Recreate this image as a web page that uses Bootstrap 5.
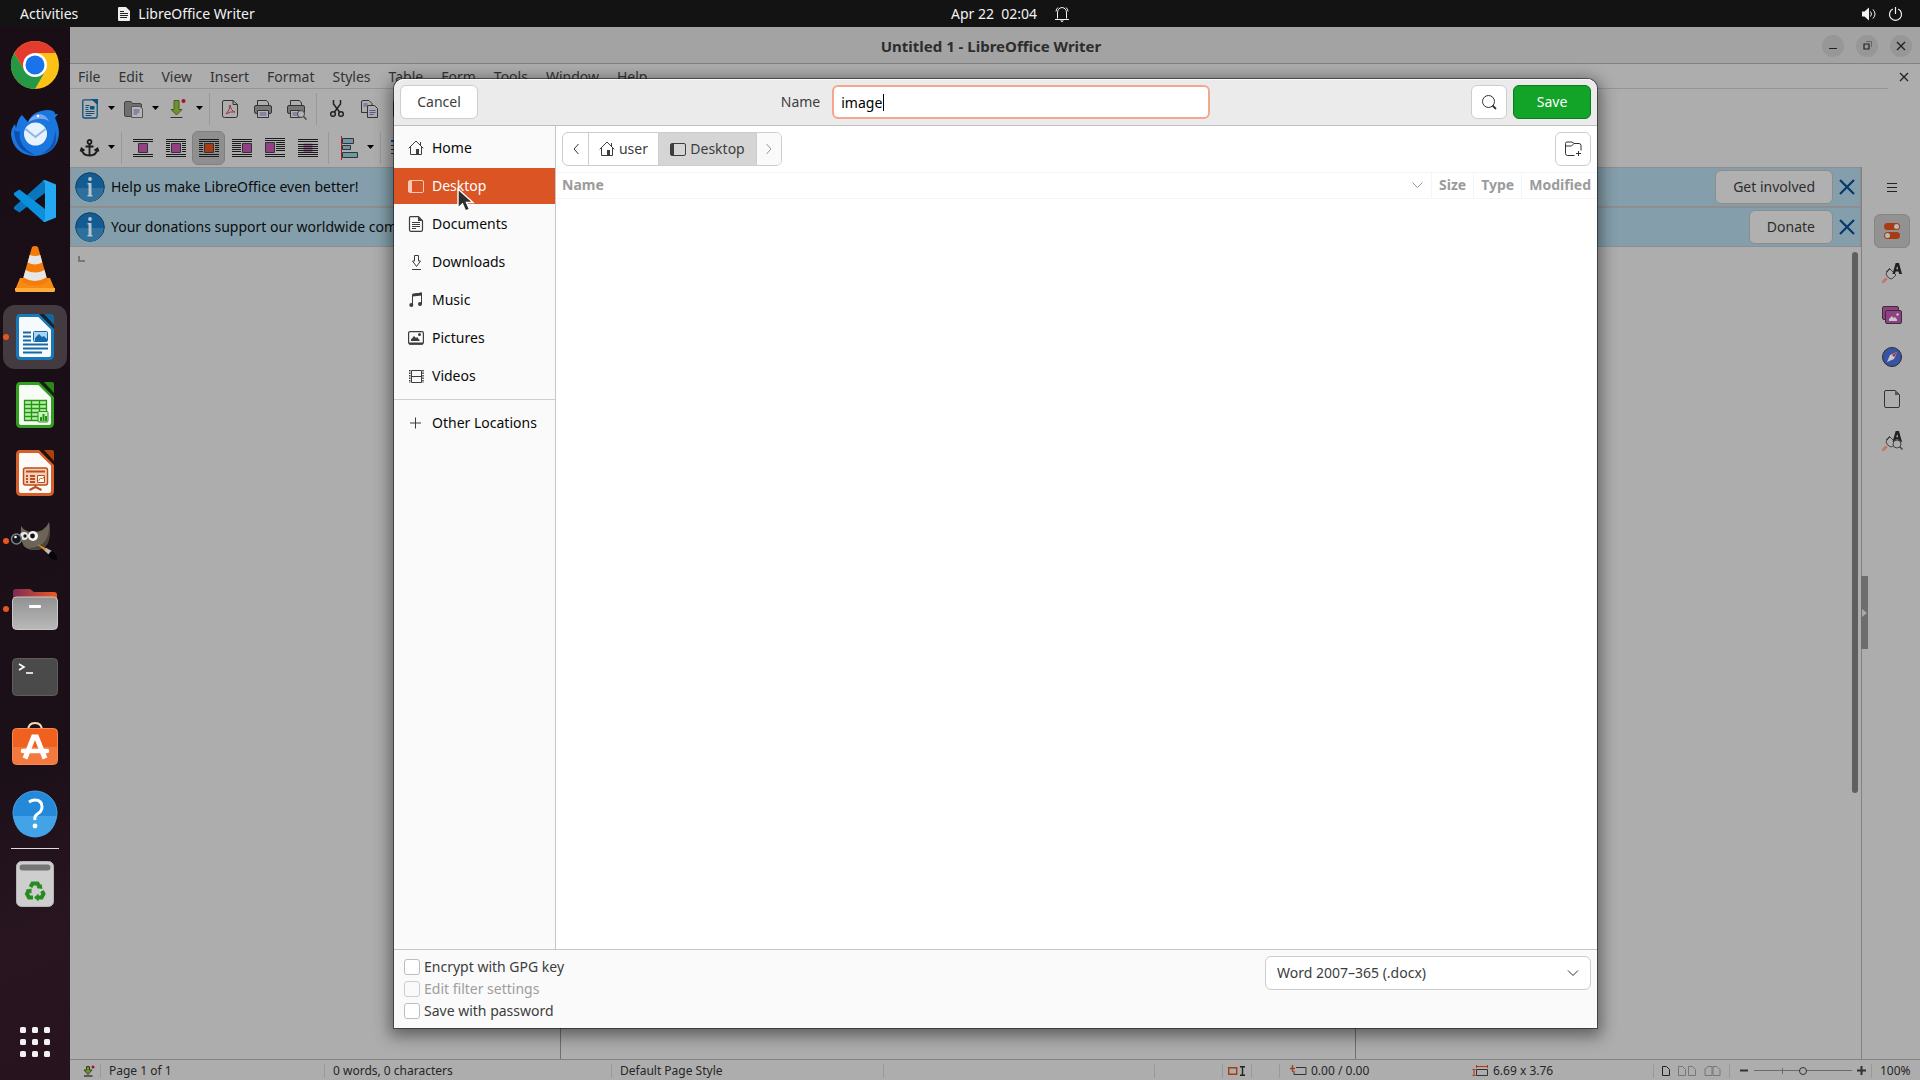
<!DOCTYPE html>
<html lang="en">
<head>
<meta charset="utf-8">
<meta name="viewport" content="width=device-width, initial-scale=1">
<title>Untitled 1 - LibreOffice Writer</title>
<link rel="stylesheet" href="https://cdn.jsdelivr.net/npm/bootstrap@5.3.0/dist/css/bootstrap.min.css">
<script src="https://cdn.jsdelivr.net/npm/bootstrap@5.3.0/dist/js/bootstrap.bundle.min.js"></script>
<style>
  body { font-family: "Noto Sans", "Open Sans", sans-serif; font-size: 14px; line-height: 20px; background: #adadad; color: #2b2b2b; }
  button { font: inherit; color: inherit; background: none; border: 0; padding: 0; }
  svg { display: block; flex: none; overflow: visible; }
  .topbar { height: 27px; background: #131313; color: #f2f2f2; }
  .topbar .side { flex: 1 1 0; }
  .topbar .clock { padding-left: 100px; gap: 18px; }
  .topbar .status-icons { gap: 13px; padding-right: 18px; }
  .dock { width: 70px; background: linear-gradient(160deg, #190e15 0%, #1c1018 70%, #28151f 85%, #26131e 100%); padding: 6px 3px; }
  .dock button { width: 64px; height: 64px; position: relative; display: flex; align-items: center; justify-content: center; border-radius: 12px; }
  .dock button.current { background: #443b41; }
  .dock button.running::before { content: ""; position: absolute; left: 0; top: 29px; width: 6px; height: 6px; border-radius: 50%; background: #e95420; }
  .dock hr { width: 48px; margin: -1px auto; border-top: 1px solid #fff; opacity: .85; }
  .titlebar { height: 37px; padding-top: 1px; background: #a3a3a3; border-bottom: 1px solid #828282; font-size: 15px; font-weight: 700; color: #2d2d2d; }
  .titlebar .side { flex: 1 1 0; }
  .titlebar button { width: 22px; height: 22px; border-radius: 50%; background: #979797; display: flex; align-items: center; justify-content: center; }
  .menus { height: 25px; gap: 18px; padding: 1px 0 0 8px; border-bottom: 1px solid #959595; }
  .menus button { color: #333; }
  .tools { height: 39px; padding-left: 3px; }
  .tools button { width: 33px; height: 34px; display: flex; align-items: center; justify-content: center; border-radius: 6px; }
  .tools button.more { width: 11px; }
  .tools button.active { background: #8f8f8f; border: 1px solid #808080; }
  .tools .divider { width: 1px; height: 32px; margin: 0 3px 0 4px; background: #999; }
  .infobar { height: 40px; padding: 0 5px 0 4px; gap: 6px; background: #849fab; border: 1px solid #8f8d8d; color: #0b0b0b; }
  .infobar .action { height: 34px; padding: 0 17px; border: 1px solid #8c8c8c; border-radius: 6px; background: #b0b0b0; color: #2d2d2d; }
  .paper { width: 796px; border: 1px solid #6f6f6f; border-width: 0 1px; }
  .scroller { width: 15px; padding: 5px 3px 0 6px; }
  .scroller div { height: 67%; border-radius: 3px; background: #5f5f5f; }
  .deck { width: 59px; border-left: 1px solid #828282; position: relative; }
  .deck-tabs { gap: 8px; padding: 3px 0 0 2px; }
  .deck-tabs button { width: 36px; height: 34px; display: flex; align-items: center; justify-content: center; border-radius: 6px; }
  .deck-tabs button:first-child { margin-bottom: 2px; }
  .deck-tabs button.active { background: #929292; border: 1px solid #868686; }
  .collapser { position: absolute; left: -1px; top: calc(50% - 37px); width: 7px; height: 73px; background: #6d6d6d !important; display: flex; align-items: center; }
  .statusbar { height: 21px; padding-top: 1px; border-top: 1px solid #828282; font-size: 12px; color: #262626; }
  .statusbar > div { display: flex; align-items: center; height: 14px; border-left: 1px solid #999; }
  .statusbar > div:first-child { border-left: 0; }
  .statusbar .grow { flex: 1 1 0; }
  .zoomer { appearance: none; width: 98px; height: 14px; margin: 0 5px; background: linear-gradient(#6c6c6c, #6c6c6c) 28px center / 1px 6px no-repeat, linear-gradient(#6c6c6c, #6c6c6c) center / 100% 1px no-repeat; }
  .zoomer::-webkit-slider-thumb { appearance: none; width: 8px; height: 8px; border: 1px solid #333; border-radius: 50%; background: #adadad; }
  .save-dialog { position: absolute; left: 324px; right: 323px; top: 52px; bottom: 52px; background: #fff; border-radius: 10px 10px 0 0; box-shadow: 0 0 0 1px rgba(0,0,0,.45), 0 4px 16px 4px rgba(0,0,0,.45); color: #3d3d3d; }
  .dialog-head { height: 47px; padding: 0 6px; background: #ebebeb; box-shadow: inset 0 1px #f8f8f8; border-bottom: 1px solid #bfbfbf; border-radius: 10px 10px 0 0; }
  .dialog-head .side { flex: 1 1 0; gap: 6px; }
  .ctl { height: 34px; border: 1px solid #cdcdcd; border-radius: 6px; background: #fff; }
  .ctl.wide { width: 78px; }
  .ctl.square { width: 36px; display: flex; align-items: center; justify-content: center; }
  .ctl.go { background: #12a329; border-color: #0d7a1e; color: #fff; }
  .name-field { width: 378px; height: 34px; border: 2px solid #f5a78e; border-radius: 6px; padding: 0 7px; background: #fff; color: #000; outline: 0; }
  .caret-bar { position: absolute; left: 51px; top: 9px; width: 1px; height: 17px; background: #000; }
  .places { width: 162px; padding-top: 4px; background: #fafafa; border-right: 1px solid #c6c6c6; color: #0a0a0a; }
  .places a { display: flex; align-items: center; gap: 8px; height: 36px; margin-bottom: 2px; padding-left: 14px; color: inherit; text-decoration: none; position: relative; }
  .places a svg { color: #3d3d3d; }
  .places a.active { background: #da5424; color: #fff; }
  .places a.active .place-icon { color: #f6c8b8; }
  .places hr { margin: 5px 0; border-color: #cfcfcf; opacity: 1; }
  .pointer-mark { position: absolute; left: 63px; top: 20px; }
  .pathline { height: 46px; padding: 0 6px; }
  .pathbar { height: 34px; border: 1px solid #cdcdcd; border-radius: 6px; overflow: hidden; }
  .pathbar button { display: flex; align-items: center; justify-content: center; gap: 4px; border-right: 1px solid #cdcdcd; }
  .pathbar button:last-child { border-right: 0; background: #fafafa; }
  .pathbar button.active { background: #d5d5d5; }
  .files { width: 100%; border-collapse: collapse; color: #9b9b9b; }
  .files th { height: 26px; padding: 0 7px 2px; line-height: 20px; border: 1px solid #f5f5f5; border-width: 1px 1px 1px 0; }
  .files th:first-child { padding-left: 6px; }
  .files th:last-child { border-right: 0; padding-right: 6px; }
  .dialog-foot { height: 79px; padding: 6px 6px 0 10px; background: #fafafa; border-top: 1px solid #c6c6c6; }
  .dialog-foot label { display: flex; align-items: center; gap: 4px; height: 22px; }
  .dialog-foot input { appearance: none; width: 16px; height: 16px; margin: 0; border: 1px solid #bdbdbd; border-radius: 3px; background: #fff; }
  .dialog-foot .off { color: #9d9d9d; }
  .dialog-foot .off input { background: #fafafa; border-color: #cdcdcd; }
  .format-box { position: relative; width: 326px; }
  .format-box select { appearance: none; width: 100%; padding: 0 11px; color: #3d3d3d; }
  .format-box svg { position: absolute; right: 12px; top: 13px; pointer-events: none; }
</style>
</head>
<body class="vh-100 d-flex flex-column overflow-hidden">

<svg width="0" height="0" class="position-absolute" aria-hidden="true">
  <defs>
    <symbol id="home" viewBox="0 0 16 16"><path d="M.7 8.3 8 1l7.3 7.3M2.5 7v7.5h11V7M12.5 5V2" fill="none" stroke="currentColor"/><path d="M8 9h3v5.5H8z" fill="currentColor"/></symbol>
    <symbol id="desk" viewBox="0 0 16 16"><rect x=".5" y="2.5" width="15" height="12" rx="1.5" fill="none" stroke="currentColor"/><path d="M1 3h3v11H1z" fill="currentColor"/></symbol>
    <symbol id="cross" viewBox="0 0 16 16"><path d="m1 1 14 14M15 1 1 15" fill="none" stroke="#063a68" stroke-width="2.200"/></symbol>
    <symbol id="info" viewBox="0 0 30 30"><circle cx="15" cy="15" r="14.300" fill="#125b93" stroke="#173c5a"/><path d="M1.500 16a13.500 13.500 0 0 0 27 0z" fill="#2d6f9d"/><circle cx="15" cy="7" r="1.900" fill="#b8c4cc"/><path d="M12.500 11h4v12h1v1.500h-5V23h1V12.500h-1z" fill="#b8c4cc"/></symbol>
    <symbol id="printer" viewBox="0 0 20 20"><path d="M4.500 7V1.500h9L15.500 4v3" fill="none" stroke="#333"/><rect x="1.500" y="6.500" width="17" height="8" rx="1.500" fill="#777" stroke="#333"/><path d="M4.500 11.500h11v7h-11z" fill="#b4b4b4" stroke="#333"/><path d="M6.500 14h7M6.500 16h7" stroke="#55559a"/></symbol>
    <symbol id="savearrow" viewBox="0 0 20 20"><path d="M6 1.500h5v9h3L8.500 16 3 10.500h3z" fill="#6f9130" stroke="#47601c"/><path d="M2.500 18.500h12" stroke="#333"/><circle cx="15.500" cy="2" r="2" fill="#a01424"/></symbol>
    <symbol id="savesmall" viewBox="0 0 12 12"><path d="M3.500 1.500h3V5h2.500L5 9.500 1 5h2.500z" fill="#6f9130" stroke="#33421a"/><path d="M1 11h8.500" stroke="#222" stroke-width="1.200"/><circle cx="10" cy="2" r="1.500" fill="#a01424"/></symbol>
    <symbol id="brush" viewBox="0 0 20 20"><path d="m1 19 3-3" stroke="#c4786c" stroke-width="3" stroke-linecap="round"/><path d="M5 13q-2-2 0-4l3-3 6 6-3 3q-2 2-4 0z M4 9l4-4" fill="#b0b0b0" stroke="#444"/><path d="m10.500 11 3.200-11h3.300L20 11h-2.800l-.6-2.500h-3L13 11z M14.200 6.300h2L15.200 3z" fill="#202020" fill-rule="evenodd"/></symbol>
  </defs>
</svg>

<header class="topbar d-flex align-items-center">
  <div class="side d-flex align-items-center">
    <button type="button" class="ms-3 me-4 ps-1 pe-3">Activities</button>
    <button type="button" class="d-flex align-items-center gap-2"><svg width="12" height="14" viewBox="0 0 12 14"><path d="M1 0h7l4 4v9q0 1-1 1H1q-1 0-1-1V1q0-1 1-1z" fill="#eee"/><path d="M2 4.500h4M2 6.500h8M2 8.500h8M2 10.500h7" stroke="#222"/></svg>LibreOffice Writer</button>
  </div>
  <button type="button" class="clock d-flex align-items-center"><span>Apr 22&nbsp; 02:04</span><svg width="14" height="16" viewBox="0 0 14 16"><path d="M2.500 12.500V7Q2.500 2 7 1.500 11.500 2 11.500 7v5.500M0 13.500h14M1 5.500Q1.200 2.800 3 1.500M13 5.500Q12.800 2.800 11 1.500" fill="none" stroke="#f2f2f2"/><path d="M5 14.500h4l-2 1.800z" fill="#f2f2f2"/></svg></button>
  <div class="side d-flex justify-content-end">
    <button type="button" class="status-icons d-flex align-items-center" aria-label="System menu">
      <svg width="14" height="14" viewBox="0 0 14 14"><path d="M0 4.500h2.500L7 .5v13L2.500 9.500H0z" fill="#f2f2f2"/><path d="M8.500 4.500q2 2.500 0 5M11 2.500q4 4.500 0 9" fill="none" stroke="#f2f2f2"/></svg>
      <svg width="13" height="14" viewBox="0 0 13 14"><path d="M6.500 0v7M3.800 2a6 6 0 1 0 5.400 0" fill="none" stroke="#f2f2f2" stroke-width="1.200"/></svg>
    </button>
  </div>
</header>

<div class="d-flex flex-grow-1 overflow-hidden">
  <nav class="dock d-flex flex-column gap-1" aria-label="Dock">
    <button type="button" aria-label="Google Chrome"><svg width="48" height="48" viewBox="0 0 48 48"><circle cx="24" cy="24" r="24" fill="#fcc216"/><path d="M3.200 12A24 24 0 0 1 44.800 12H24L13.600 30z" fill="#e33b2e"/><path d="M3.200 12A24 24 0 0 0 24 48L34.400 30H13.600z" fill="#259846"/><circle cx="24" cy="24" r="12" fill="#fff"/><circle cx="24" cy="24" r="9.500" fill="#1a73e8"/></svg></button>
    <button type="button" aria-label="Thunderbird"><svg width="48" height="46" viewBox="0 0 48 46"><path d="M17 12Q21 1 36 0q8 0 8 4h3l-3 4q4 8 4 16Q46 44 24 46 3 45 0 25q0-7 4-11l1 4Q7 8 11 5q4 5 6 7z" fill="#1a77df"/><path d="M3 20q3 3 6 1Q6 36 24 45 4 42 3 20z" fill="#0d4fb0"/><path d="M17 12q5-8 12-8 6 1 9 7-9-5-21 1z" fill="#7aa7ee"/><circle cx="24.500" cy="24" r="11.500" fill="#e8f2fd"/><path d="m14.500 19 10 8 10-8" fill="none" stroke="#8db6e8" stroke-width="2"/><path d="M30 44q14-6 14-24 5 20-14 24z" fill="#1152b4"/><circle cx="27" cy="6" r="1.200" fill="#fff"/></svg></button>
    <button type="button" aria-label="Visual Studio Code"><svg width="42" height="42" viewBox="0 0 42 42"><path d="M31 0v13L5.500 32.500 0 29V27L29 .7z" fill="#0b75bd"/><path d="M31 42V29L5.500 9.500 0 13v2L29 41.300z" fill="#0b90dd"/><path d="M31 0 42 4.500v33L31 42l-2-.7q2-1 2-3.300V4q0-2-2-3.300z" fill="#25a9f2"/></svg></button>
    <button type="button" aria-label="VLC"><svg width="40" height="46" viewBox="0 0 40 46"><path d="M5 32h30l5 12q0 2-2 2H2q-2 0-2-2z" fill="#f78a12"/><path d="M0 42h40v2q0 2-2 2H2q-2 0-2-2z" fill="#ffac3a"/><path d="M17 1q3-2 6 0l10 35q-13 7-26 0z" fill="#f57c0a"/><path d="m14.700 9-2 7.500q7 4 14.600 0l-2-7.500q-5 2-10.600 0zM10.500 24l-2 7.500q11 7 23 0l-2-7.500q-9 5-19 0z" fill="#e6e6e6"/></svg></button>
    <button type="button" class="current running" aria-label="LibreOffice Writer"><svg width="38" height="46" viewBox="0 0 38 46"><path d="M4 1.500h19L36.500 15v26q0 3.500-3.500 3.500H5Q1.500 44.500 1.500 41V5Q1.500 1.500 4 1.500z" fill="#f7fafc" stroke="#1878ba" stroke-width="3"/><path d="M23 0 38 15V0z" fill="#16222c"/><path d="M28 0h8q2 0 2 2v9z" fill="#14669f"/><path d="M7 18.500h8M7 22.500h8M7 26.500h8M7 30.500h25M7 34.500h25M7 38.500h19" stroke="#1668a6" stroke-width="2"/><rect x="17.500" y="17.500" width="14" height="10" rx="1" fill="#a8d6f4" stroke="#1668a6"/><path d="M19 27v-3l4-4 3 3 2-1 3 3v2z" fill="#1668a6"/></svg></button>
    <button type="button" aria-label="LibreOffice Calc"><svg width="38" height="46" viewBox="0 0 38 46"><path d="M4 1.500h19L36.500 15v26q0 3.500-3.500 3.500H5Q1.500 44.500 1.500 41V5Q1.500 1.500 4 1.500z" fill="#f8fcf7" stroke="#31a01e" stroke-width="3"/><path d="M23 0 38 15V0z" fill="#151f12"/><path d="M28 0h8q2 0 2 2v9z" fill="#2b8a17"/><path d="M8.500 18.500h22v20h-22z" fill="#b8efab" stroke="#259412" stroke-width="1.300"/><path d="M15.500 18v21M23.500 18v21M8 22.500h23M8 26.500h23M8 30.500h23M8 34.500h23" stroke="#259412" stroke-width="1.300"/><rect x="22" y="29.500" width="10" height="10.500" rx="1" fill="#c8f4be" stroke="#259412"/><path d="M25 39v-4M27.500 39v-7M30 39v-5" stroke="#259412" stroke-width="2"/></svg></button>
    <button type="button" aria-label="LibreOffice Impress"><svg width="38" height="46" viewBox="0 0 38 46"><path d="M4 1.500h19L36.500 15v26q0 3.500-3.500 3.500H5Q1.500 44.500 1.500 41V5Q1.500 1.500 4 1.500z" fill="#fefaf7" stroke="#d4602c" stroke-width="3"/><path d="M23 0 38 15V0z" fill="#24130d"/><path d="M28 0h8q2 0 2 2v9z" fill="#ab420e"/><rect x="7.500" y="18" width="24" height="17" rx="2" fill="#f6d0bc" stroke="#b84f1c" stroke-width="1.500"/><path d="M10 21.500h19M14 26h5M14 29h5M14 32h5M10 26h2M10 29h2M10 32h2M19.500 35v3m0-1-6 3m6-3 6 3" stroke="#b84f1c" stroke-width="2"/><path d="M21.500 25.500h7v7h-7z" fill="#fff" stroke="#b84f1c"/><path d="m22.500 31 2-3 2 1 2-3" fill="none" stroke="#e0702e"/></svg></button>
    <button type="button" class="running" aria-label="GIMP"><svg width="48" height="38" viewBox="0 0 48 38"><path d="M10 4q4 6 12 6 12 0 16-10 2 10-1 20-3 8-13 8-11 0-13-8-2-8-1-16z" fill="#6b6457"/><path d="M38 0q1 12-4 19t-16 7q5 3 10 1 8-1 10-9 2-9 0-18z" fill="#49453d"/><circle cx="13" cy="14" r="4" fill="#e8e8e8"/><circle cx="22" cy="14" r="5" fill="#f4f4f4"/><circle cx="14" cy="14" r="1.700" fill="#111"/><circle cx="21.500" cy="14" r="2.400" fill="#111"/><circle cx="5.500" cy="17" r="5" fill="#15181b" stroke="#7c8388" stroke-width="1.500"/><circle cx="4.500" cy="15" r="1.300" fill="#fff"/><path d="m26 22 11 5-2 3z" fill="#e08a24"/><path d="m35 26 6 3-3 4-4-4z" fill="#bbb"/><path d="M40 29q6 2 6 9-7 0-9-5z" fill="#050505"/></svg></button>
    <button type="button" class="running" aria-label="Files"><svg width="46" height="42" viewBox="0 0 46 42"><defs><linearGradient id="fg"><stop stop-color="#7d2b52"/><stop offset="1" stop-color="#ee5a25"/></linearGradient><linearGradient id="gg" x2="0" y2="1"><stop stop-color="#919191"/><stop offset="1" stop-color="#b9b9b9"/></linearGradient></defs><path d="M1 15V4q0-3 3-3h14l4 3h20q3 0 3 3v8z" fill="url(#fg)"/><rect x=".5" y="9" width="45" height="32.500" rx="4" fill="url(#gg)" stroke="#c9c9c9"/><rect x="17" y="17" width="12" height="3" rx="1" fill="#fff"/></svg></button>
    <button type="button" aria-label="Terminal"><svg width="46" height="38" viewBox="0 0 46 38"><rect x=".5" y=".5" width="45" height="37" rx="4" fill="#4a4a4a" stroke="#5e5e5e"/><path d="m7 6 5 3-5 3" fill="none" stroke="#fff" stroke-width="1.600"/><path d="M14 15h7" stroke="#fff" stroke-width="1.600"/></svg></button>
    <button type="button" class="pb-1" aria-label="Software"><svg width="46" height="43" viewBox="0 0 46 43"><path d="M16 9Q16 1 23 1t7 8" fill="none" stroke="#f4dcae" stroke-width="2"/><rect x=".5" y="6.500" width="45" height="36" rx="4" fill="#f0601f" stroke="#f58a58"/><path d="M1 25h44v13q0 4-4 4H5q-4 0-4-4z" fill="#f3793f"/><path d="M13 36.500 21.500 15h3L33 36.500" fill="none" stroke="#fff" stroke-width="5"/><path d="M11 29h24" stroke="#fff" stroke-width="4.500" stroke-linecap="round"/></svg></button>
    <button type="button" aria-label="Help"><svg width="46" height="46" viewBox="0 0 46 46"><circle cx="23" cy="23" r="22" fill="#2489d9" stroke="#4aa3e6"/><path d="M1.500 26a21.500 21.500 0 0 0 43 0z" fill="#42a4e7"/><path d="M17 12q3-2 6-2 7 0 7 7 0 4-4 6.500T23 30" fill="none" stroke="#fff" stroke-width="3"/><circle cx="23" cy="36" r="2.400" fill="#fff"/></svg></button>
    <hr>
    <button type="button" aria-label="Trash"><svg width="38" height="46" viewBox="0 0 38 46"><rect x=".5" y=".5" width="37" height="45" rx="5" fill="#cecece" stroke="#b5b5b5"/><rect x="3.500" y="3.500" width="31" height="6" rx="3" fill="#757575"/><g fill="none" stroke="#258c20" stroke-width="4"><path d="m14.500 26 2-3.500h5l2.500 4M26 30l1.500 3-2 3.500h-4M17 36.500h-4l-2-3.500 2-4"/></g><path d="m26.500 28-6-1 5-4zM22.500 32.500v8l-4.500-4zM9.500 29l6-1.500v5z" fill="#258c20"/></svg></button>
    <button type="button" class="mt-auto" aria-label="Show applications"><svg width="30" height="30" viewBox="0 0 30 30" fill="#f2f2f2"><g id="dots"><rect width="6" height="6" rx="1.500"/><rect x="12" width="6" height="6" rx="1.500"/><rect x="24" width="6" height="6" rx="1.500"/></g><use href="#dots" y="12"/><use href="#dots" y="24"/></svg></button>
  </nav>

  <div class="flex-grow-1 d-flex flex-column position-relative">
    <div class="titlebar d-flex align-items-center">
      <div class="side"></div>
      <div>Untitled 1 - LibreOffice Writer</div>
      <div class="side d-flex justify-content-end pe-2">
        <button type="button" class="me-2" aria-label="Minimize"><svg width="8" height="8"><path d="M0 6.500h8" stroke="#222"/></svg></button>
        <button type="button" class="mx-1" aria-label="Restore"><svg width="9" height="9" viewBox="0 0 9 9" fill="none"><path d="M3 .5h5.500V6" stroke="#666"/><path d="M1 3h5v5H1z" stroke="#222" stroke-width="1.200"/></svg></button>
        <button type="button" class="ms-2" aria-label="Close"><svg width="8" height="8"><path d="m0 0 8 8M8 0 0 8" stroke="#222" stroke-width="1.400"/></svg></button>
      </div>
    </div>

    <div class="d-flex">
      <nav class="menus d-flex align-items-center flex-grow-1" aria-label="Menu bar">
        <button type="button">File</button><button type="button">Edit</button><button type="button">View</button><button type="button">Insert</button><button type="button">Format</button><button type="button">Styles</button><button type="button">Table</button><button type="button">Form</button><button type="button">Tools</button><button type="button">Window</button><button type="button">Help</button>
      </nav>
      <button type="button" class="px-2 mx-1" aria-label="Close document"><svg width="8" height="8"><path d="m0 0 8 8M8 0 0 8" stroke="#222" stroke-width="1.300"/></svg></button>
    </div>

    <div class="tools d-flex align-items-center" role="toolbar" aria-label="Standard">
      <button type="button" aria-label="New"><svg width="16" height="20" viewBox="0 0 16 20"><path d="M2 .8h9l4.200 4V17q0 2-2 2H3q-2.200 0-2.200-2V2q0-1.200 1.200-1.200z" fill="#b0b0b0" stroke="#0b527f" stroke-width="1.300"/><path d="M9 0h7v6z" fill="#0b527f"/><path d="M3.500 6.500h4M3.500 8.500h3M3.500 10.500h3M3.500 12.500h9M3.500 14.500h9M3.500 16.500h6" stroke="#0b527f"/><path d="M8 7h4.500v3.500H8z" fill="#0b527f"/></svg></button>
      <button type="button" class="more" aria-label="New options"><svg width="7" height="5"><path d="M0 0h7L3.500 4z"/></svg></button>
      <button type="button" aria-label="Open"><svg width="19" height="18" viewBox="0 0 19 18"><path d="M.5 15V3Q.5 1.500 2 1.500h5l1.500 2h7.500q1.500 0 1.500 1.500v10q0 1.500-1.500 1.500H2Q.5 16.500.5 15z" fill="#6f6f6f" stroke="#444"/><path d="M7.500 6.500h8l3 2v9h-11z" fill="#b6b6b6" stroke="#555"/><path d="M9.500 10h6M9.500 12h6M9.500 14h4" stroke="#55559a"/></svg></button>
      <button type="button" class="more" aria-label="Open options"><svg width="7" height="5"><path d="M0 0h7L3.500 4z"/></svg></button>
      <button type="button" aria-label="Save"><svg width="19" height="20"><use href="#savearrow" width="20" height="20"/></svg></button>
      <button type="button" class="more" aria-label="Save options"><svg width="7" height="5"><path d="M0 0h7L3.500 4z"/></svg></button>
      <span class="divider"></span>
      <button type="button" aria-label="Export as PDF"><svg width="16" height="18" viewBox="0 0 16 18"><path d="M2 .5h9l4.500 4v11q0 2-2 2H2.500q-2 0-2-2V2Q.5.500 2 .5zM11 .5v4h4.500" fill="none" stroke="#333"/><path d="M4 14q4-4 4-9 1 6 5 7-5-1-9 2z" fill="none" stroke="#a03040"/></svg></button>
      <button type="button" aria-label="Print"><svg width="20" height="20"><use href="#printer"/></svg></button>
      <button type="button" aria-label="Print preview"><svg width="20" height="20" viewBox="0 0 20 20"><use href="#printer"/><circle cx="15" cy="15" r="3.500" fill="#b4b4b4" stroke="#444"/><path d="m17.500 17.500 3 3" stroke="#444" stroke-width="1.400"/></svg></button>
      <span class="divider"></span>
      <button type="button" aria-label="Cut"><svg width="14" height="17" viewBox="0 0 14 17" fill="none" stroke="#222" stroke-width="1.500"><path d="M3.500 0v4l6 8M10.500 0v4l-6 8"/><circle cx="3" cy="14" r="2.300"/><circle cx="11" cy="14" r="2.300"/></svg></button>
      <button type="button" aria-label="Copy"><svg width="17" height="18" viewBox="0 0 17 18" fill="#adadad" stroke="#333"><path d="M.5 2Q.5.500 2 .5h6l3 3v9H.500z"/><path d="M6.500 5.500h7l3 3v9h-10z"/><path d="M2.500 4h4M2.500 6h3M8.500 10.500h6M8.500 12.500h6M8.500 14.500h4" stroke="#55559a"/></svg></button>
      <button type="button" aria-label="Paste"><svg width="20" height="20" viewBox="0 0 20 20"><rect x=".5" y="1.500" width="17" height="17" rx="2" fill="#777" stroke="#333"/></svg></button>
    </div>

    <div class="tools d-flex align-items-center" role="toolbar" aria-label="Image">
      <button type="button" aria-label="Anchor"><svg width="19" height="18" viewBox="0 0 19 18" fill="none" stroke="#1c1c1c" stroke-width="1.800"><circle cx="9.500" cy="3" r="2"/><path d="M9.500 5v11M5.500 7.500h8M1.500 10q1 6.500 8 6.500t8-6.500M.5 12.500l1-3 3 2M18.500 12.500l-1-3-3 2"/></svg></button>
      <button type="button" class="more" aria-label="Anchor options"><svg width="7" height="5"><path d="M0 0h7L3.500 4z"/></svg></button>
      <span class="divider me-1"></span>
      <button type="button" aria-label="Wrap off"><svg width="20" height="20" viewBox="0 0 20 20"><path d="M0 1.500h20M0 3.500h20M0 16.500h20M0 18.500h20" stroke="#1b1b1b"/><path d="M5.500 5.500h9v9h-9z" fill="#923f86" stroke="#333"/></svg></button>
      <button type="button" aria-label="Page wrap"><svg width="20" height="20" viewBox="0 0 20 20"><path d="M0 1.500h20M0 3.500h20M0 5.500h4M0 7.500h4M0 9.500h4M0 11.500h4M0 13.500h4M16 5.500h4M16 7.500h4M16 9.500h4M16 11.500h4M16 13.500h4M0 16.500h20M0 18.500h20" stroke="#1b1b1b"/><path d="M5.500 5.500h9v9h-9z" fill="#923f86" stroke="#333"/></svg></button>
      <button type="button" class="active" aria-label="Optimal wrap"><svg width="20" height="20" viewBox="0 0 20 20"><path d="M0 1.500h20M0 3.500h20M0 5.500h4M0 7.500h4M0 9.500h4M0 11.500h4M0 13.500h4M16 5.500h4M16 7.500h4M16 9.500h4M16 11.500h4M16 13.500h4M0 16.500h20M0 18.500h20" stroke="#1b1b1b"/><path d="M5.500 5.500h9v9h-9z" fill="#a83b14" stroke="#333"/></svg></button>
      <button type="button" aria-label="Wrap left"><svg width="20" height="20" viewBox="0 0 20 20"><path d="M0 1.500h20M0 3.500h20M0 5.500h9M0 7.500h9M0 9.500h9M0 11.500h9M0 13.500h9M0 16.500h20M0 18.500h20" stroke="#1b1b1b"/><path d="M10.500 5.500h9v9h-9z" fill="#923f86" stroke="#333"/></svg></button>
      <button type="button" aria-label="Wrap right"><svg width="20" height="20" viewBox="0 0 20 20"><path d="M0 .5h20M0 2.500h20M11 4.500h9M11 6.500h9M11 8.500h9M11 10.500h9M11 12.500h9M0 16.500h20M0 18.500h20" stroke="#1b1b1b"/><path d="M.5 4.500h9v10h-9z" fill="#923f86" stroke="#333"/></svg></button>
      <button type="button" aria-label="Wrap through"><svg width="20" height="20" viewBox="0 0 20 20"><path d="M5.500 5.500h9v9h-9z" fill="#8d5c88"/><path d="M0 1.500h20M0 3.500h20M0 6.500h20M0 8.500h20M0 10.500h20M0 12.500h20M0 14.500h20M0 16.500h20M0 18.500h20" stroke="#1b1b1b"/></svg></button>
      <span class="divider"></span>
      <button type="button" aria-label="Align"><svg width="20" height="24" viewBox="0 0 20 24"><path d="M3.500 2.500h11v5h-11zM3.500 9.500h8v4h-8zM3.500 16.500h15v5h-15z" fill="#6d98a8" stroke="#333"/><path d="M2.500 0v24" stroke="#a8182c"/></svg></button>
      <button type="button" class="more" aria-label="Align options"><svg width="7" height="5"><path d="M0 0h7L3.500 4z"/></svg></button>
      <span class="divider"></span>
      <button type="button" aria-label="Position"><svg width="20" height="20" viewBox="0 0 20 20"><path d="M0 3h20" stroke="#0b4f8f" stroke-width="2"/><path d="M0 7.500h20M0 11.500h20M0 15.500h20" stroke="#333"/></svg></button>
    </div>

    <div class="d-flex flex-grow-1">
      <main class="flex-grow-1 d-flex flex-column">
        <div class="infobar d-flex align-items-center">
          <svg width="30" height="30"><use href="#info"/></svg><span class="flex-grow-1">Help us make LibreOffice even better!</span>
          <button type="button" class="action">Get involved</button>
          <button type="button" aria-label="Dismiss"><svg width="16" height="16"><use href="#cross"/></svg></button>
        </div>
        <div class="infobar d-flex align-items-center">
          <svg width="30" height="30"><use href="#info"/></svg><span class="flex-grow-1">Your donations support our worldwide com</span>
          <button type="button" class="action">Donate</button>
          <button type="button" aria-label="Dismiss"><svg width="16" height="16"><use href="#cross"/></svg></button>
        </div>
        <div class="d-flex flex-grow-1">
          <div class="flex-grow-1 d-flex justify-content-center position-relative">
            <svg class="position-absolute top-0 start-0 ms-2 mt-2" width="7" height="7"><path d="M1 1v5h6" fill="none" stroke="#777" stroke-width="2"/></svg>
            <div class="paper"></div>
          </div>
          <div class="scroller"><div></div></div>
        </div>
      </main>
      <aside class="deck">
        <div class="deck-tabs d-flex flex-column align-items-center">
          <button type="button" aria-label="Sidebar settings"><svg width="10" height="9"><path d="M0 .5h10M0 4.500h10M0 8.500h10" stroke="#222"/></svg></button>
          <button type="button" class="active" aria-label="Properties"><svg width="16" height="16" viewBox="0 0 16 16"><rect width="16" height="7" rx="3.500" fill="#a83b14"/><rect y="9" width="16" height="7" rx="3.500" fill="#a83b14"/><circle cx="12.500" cy="3.500" r="2.500" fill="#b8b8b8"/><circle cx="3.500" cy="12.500" r="2.500" fill="#b8b8b8"/></svg></button>
          <button type="button" aria-label="Styles"><svg width="20" height="20"><use href="#brush"/></svg></button>
          <button type="button" aria-label="Gallery"><svg width="20" height="18" viewBox="0 0 20 18"><rect x=".5" y=".5" width="16" height="13" rx="1.500" fill="#923f86" stroke="#333"/><rect x="3.500" y="4.500" width="16" height="13" rx="1.500" fill="#923f86" stroke="#333"/><path d="M7 15v-2l3-3 1.500 2 1.500-1 2 2.500V15z" fill="#c8c8c8"/><circle cx="15.500" cy="8.500" r="1.200" fill="#c8c8c8"/></svg></button>
          <button type="button" aria-label="Navigator"><svg width="20" height="20" viewBox="0 0 20 20"><circle cx="10" cy="10" r="9.500" fill="#3953a4" stroke="#2c2c2c"/><path d="m15 5-3 7-7 3 3-7z" fill="#c8c8c8"/><path d="m15 5-3 5-2-2z" fill="#b02232"/></svg></button>
          <button type="button" aria-label="Page"><svg width="16" height="18" viewBox="0 0 16 18"><path d="M2 .5h9l4.500 4V16q0 1.500-1.500 1.500H2Q.5 17.500.5 16V2Q.5.500 2 .5z" fill="none" stroke="#333"/><path d="M11 .5v4.500h4.500z" fill="#555"/></svg></button>
          <button type="button" aria-label="Style inspector"><svg width="20" height="20" viewBox="0 0 20 20"><use href="#brush"/><circle cx="15" cy="13" r="4" fill="#adadad" stroke="#444"/><path d="m18 16 2.500 2.500" stroke="#444" stroke-width="1.400"/></svg></button>
        </div>
        <button type="button" class="collapser" aria-label="Hide sidebar"><svg width="6" height="8"><path d="M1 0 6 4 1 8z" fill="#a8a8a8"/></svg></button>
      </aside>
    </div>

    <footer class="statusbar d-flex align-items-center">
      <div class="justify-content-center ps-2" style="width:30px"><svg width="12" height="12"><use href="#savesmall"/></svg></div>
      <div class="ps-2" style="width:224px">Page 1 of 1</div>
      <div class="ps-2" style="width:287px">0 words, 0 characters</div>
      <div class="ps-2" style="width:272px">Default Page Style</div>
      <div class="grow"></div>
      <div style="width:68px"></div>
      <div class="justify-content-center" style="width:29px"><svg width="18" height="10" viewBox="0 0 18 10" fill="none"><path d="M.7 1.700h8v6.600h-8z" stroke="#a83b14" stroke-width="1.400"/><path d="M12 .7h5M12 9.300h5M14.500 1v8" stroke="#222" stroke-width="1.400"/></svg></div>
      <div style="width:28px"></div>
      <div class="gap-1" style="width:374px;padding-left:10px"><span class="d-flex align-items-center gap-1" style="width:178px"><svg width="17" height="11" viewBox="0 0 17 11" fill="none"><path d="M6 2.500h10v7H4V6" stroke="#333"/><path d="M0 3.500h5M2.500 0v7" stroke="#a83b14" stroke-width="1.300"/></svg>0.00 / 0.00</span><svg width="17" height="12" viewBox="0 0 17 12" fill="none"><path d="M4.500 4.500h11v6h-11z" stroke="#333"/><path d="M4 1.500h12M4.500 0v3M15.500 0v3M2 4.500v6M.5 4.500h3M.5 10.500h3" stroke="#a83b14"/></svg>6.69 x 3.76</div>
      <div class="gap-1 justify-content-center" style="width:76px" aria-label="View layout">
        <svg class="me-1" width="8" height="10"><path d="M.5.500h4l3 3v6h-7z" fill="none" stroke="#222"/></svg>
        <svg class="me-1" width="18" height="10"><path d="M.5.500h4l3 3v6h-7zM10.500.500h4l3 3v6h-7z" fill="none" stroke="#777"/></svg>
        <svg width="17" height="10"><path d="M4 .5h4v9h-7V3zM9 .5h4l3 3v6H9z" fill="none" stroke="#777"/></svg>
      </div>
      <div style="width:142px;padding-left:10px"><button type="button" aria-label="Zoom out"><svg width="9" height="9"><path d="M0 4.500h8" stroke="#333" stroke-width="2"/></svg></button><input class="zoomer" type="range" min="0" max="100" value="50" aria-label="Zoom"><button type="button" aria-label="Zoom in"><svg width="9" height="9"><path d="M0 4.500h9M4.500 0v9" stroke="#333" stroke-width="2"/></svg></button></div>
      <div class="ps-2" style="width:49px">100%</div>
    </footer>

    <section class="save-dialog d-flex flex-column" role="dialog" aria-label="Save">
      <div class="dialog-head d-flex align-items-center">
        <div class="side d-flex"><button type="button" class="ctl wide">Cancel</button></div>
        <div class="d-flex align-items-center">
          <label for="fname" class="pe-2 me-1">Name</label>
          <div class="position-relative"><input id="fname" type="text" class="name-field" value="image"><span class="caret-bar"></span></div>
        </div>
        <div class="side d-flex justify-content-end">
          <button type="button" class="ctl square" aria-label="Search"><svg width="15" height="14" viewBox="0 0 15 14" fill="none" stroke="#333"><circle cx="6.500" cy="6.500" r="6"/><path d="m10.500 10.500 3.500 3.500" stroke-width="1.800"/></svg></button>
          <button type="button" class="ctl wide go">Save</button>
        </div>
      </div>
      <div class="d-flex flex-grow-1">
        <nav class="places" aria-label="Places">
          <a href="#"><svg width="16" height="16"><use href="#home"/></svg>Home</a>
          <a href="#" class="active"><svg class="place-icon" width="16" height="16"><use href="#desk"/></svg>Desktop
            <svg class="pointer-mark" width="17" height="25" viewBox="0 0 17 25"><path d="M1 1v19l4.500-4 3 7 4-1.700-3-6.800H16z" fill="#2e2e2e" stroke="#fff" stroke-width="1.400"/></svg></a>
          <a href="#"><svg width="16" height="16" viewBox="0 0 16 16"><path d="M2.500.7h8l4 4v9q0 1.600-1.600 1.600H3.100q-1.600 0-1.600-1.600V1.700q0-1 1-1z" fill="none" stroke="currentColor" stroke-width="1.200"/><path d="M10 .500V5h4.500z" fill="currentColor"/><path d="M4 6.500h8M4 8.500h8M4 10.500h8M4 12.500h4" stroke="currentColor"/></svg>Documents</a>
          <a href="#"><svg width="16" height="16" viewBox="0 0 16 16"><path d="M6.500 1.500h4V7h2l-4 5.500-4-5.500h2zM4 15.500h9" fill="none" stroke="currentColor"/></svg>Downloads</a>
          <a href="#"><svg width="16" height="16" viewBox="0 0 16 16"><path d="M4.500 13V2.500l9-1.500v11" fill="none" stroke="currentColor"/><path d="M4.500 1.800 14 .5v3L4.500 4.500z" fill="currentColor"/><circle cx="3.300" cy="13" r="2" fill="currentColor"/><circle cx="12" cy="12" r="2" fill="currentColor"/></svg>Music</a>
          <a href="#"><svg width="16" height="16" viewBox="0 0 16 16"><rect x=".6" y="1.600" width="14.800" height="12.500" rx="1.500" fill="none" stroke="currentColor" stroke-width="1.200"/><path d="M1 12.500h14v2H1zM3 11V9.500l3-3.500 2 2 1-1 2.500 3V11z" fill="currentColor"/><circle cx="11.500" cy="4.500" r="1.500" fill="currentColor"/></svg>Pictures</a>
          <a href="#"><svg width="16" height="16" viewBox="0 0 16 16" fill="none" stroke="currentColor"><path d="M3.500 2.500h10v12h-10zM3.500 8.500h10"/><path d="M1.800 2v13M15 2v13" stroke-dasharray="1.500 1" stroke-width="1.500"/></svg>Videos</a>
          <hr>
          <a href="#"><svg width="16" height="16"><path d="M2 8h11M7.500 2.500v11" stroke="currentColor"/></svg>Other Locations</a>
        </nav>
        <div class="flex-grow-1 d-flex flex-column">
          <div class="pathline d-flex align-items-center justify-content-between">
            <div class="pathbar d-flex">
              <button type="button" style="width:26px" aria-label="Back"><svg width="6" height="10"><path d="M5.500 0 1 5l4.500 5" fill="none" stroke="#333"/></svg></button>
              <button type="button" style="width:70px"><svg width="16" height="16"><use href="#home"/></svg>user</button>
              <button type="button" class="active" style="width:98px"><svg width="16" height="16"><use href="#desk"/></svg>Desktop</button>
              <button type="button" style="width:24px" aria-label="Forward"><svg width="6" height="10"><path d="M.5 0 5 5 .5 10" fill="none" stroke="#999"/></svg></button>
            </div>
            <button type="button" class="ctl square" aria-label="Create folder"><svg width="17" height="16" viewBox="0 0 17 16" fill="none" stroke="#333"><path d="M9.500 14.500h-7q-2 0-2-2v-10q0-1.500 1.500-1.500h5l2 1.500h5q2 0 2 2v5M.5 5h6l2-2M13.500 10v5M11 12.500h5"/></svg></button>
          </div>
          <table class="files">
            <thead><tr>
              <th scope="col" class="w-100"><span class="d-flex align-items-center justify-content-between"><span>Name</span><svg width="12" height="6"><path d="m.5.500 5 5 5-5" fill="none" stroke="#999"/></svg></span></th>
              <th scope="col">Size</th><th scope="col">Type</th><th scope="col">Modified</th>
            </tr></thead>
          </table>
        </div>
      </div>
      <div class="dialog-foot d-flex justify-content-between">
        <div>
          <label for="gpg"><input id="gpg" type="checkbox">Encrypt with GPG key</label>
          <label for="flt" class="off"><input id="flt" type="checkbox" disabled>Edit filter settings</label>
          <label for="pwd"><input id="pwd" type="checkbox">Save with password</label>
        </div>
        <div class="format-box">
          <select class="ctl" aria-label="File type"><option>Word 2007–365 (.docx)</option></select>
          <svg width="12" height="8"><path d="m1 1.500 5 5 5-5" fill="none" stroke="#333"/></svg>
        </div>
      </div>
    </section>
  </div>
</div>
</body>
</html>
